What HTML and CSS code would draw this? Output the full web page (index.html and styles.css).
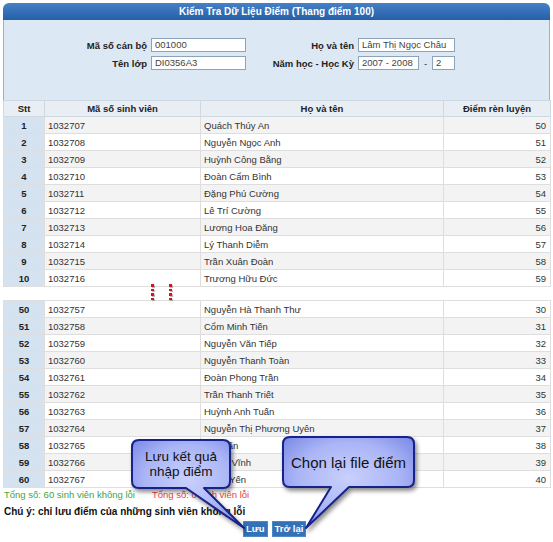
FILE: index.html
```html
<!DOCTYPE html>
<html lang="vi">
<head>
<meta charset="utf-8">
<title>Kiểm Tra Dữ Liệu Điểm</title>
<link rel="stylesheet" href="styles.css">
</head>
<body>
<div class="page">
  <div class="title">Kiểm Tra Dữ Liệu Điểm (Thang điểm 100)</div>
  <div class="info">
    <div class="form">
      <span class="lbl">Mã số cán bộ</span><span class="field">001000</span>
      <span class="lbl">Họ và tên</span><span class="field">Lâm Thị Ngọc Châu</span>
      <span class="lbl">Tên lớp</span><span class="field">DI0356A3</span>
      <span class="lbl">Năm học - Học Kỳ</span>
      <span class="term"><span class="field year">2007 - 2008</span><span class="dash">-</span><span class="field sem">2</span></span>
    </div>
  </div>

  <table class="grid">
    <colgroup><col class="c1"><col class="c2"><col class="c3"><col class="c4"></colgroup>
    <thead>
      <tr><th>Stt</th><th>Mã số sinh viên</th><th>Họ và tên</th><th>Điểm rèn luyện</th></tr>
    </thead>
    <tbody>
      <tr class="alt"><td class="stt">1</td><td>1032707</td><td>Quách Thúy An</td><td class="num">50</td></tr>
      <tr><td class="stt">2</td><td>1032708</td><td>Nguyễn Ngọc Anh</td><td class="num">51</td></tr>
      <tr class="alt"><td class="stt">3</td><td>1032709</td><td>Huỳnh Công Bằng</td><td class="num">52</td></tr>
      <tr><td class="stt">4</td><td>1032710</td><td>Đoàn Cẩm Bình</td><td class="num">53</td></tr>
      <tr class="alt"><td class="stt">5</td><td>1032711</td><td>Đặng Phú Cường</td><td class="num">54</td></tr>
      <tr><td class="stt">6</td><td>1032712</td><td>Lê Trí Cường</td><td class="num">55</td></tr>
      <tr class="alt"><td class="stt">7</td><td>1032713</td><td>Lương Hoa Đăng</td><td class="num">56</td></tr>
      <tr><td class="stt">8</td><td>1032714</td><td>Lý Thanh Diễm</td><td class="num">57</td></tr>
      <tr class="alt"><td class="stt">9</td><td>1032715</td><td>Trần Xuân Đoàn</td><td class="num">58</td></tr>
      <tr><td class="stt">10</td><td>1032716</td><td>Trương Hữu Đức</td><td class="num">59</td></tr>
    </tbody>
  </table>

  <div class="gap">
    <span class="dots"><i></i><i></i><i></i><i></i></span>
    <span class="dots"><i></i><i></i><i></i><i></i></span>
  </div>

  <table class="grid">
    <colgroup><col class="c1"><col class="c2"><col class="c3"><col class="c4"></colgroup>
    <tbody>
      <tr><td class="stt">50</td><td>1032757</td><td>Nguyễn Hà Thanh Thư</td><td class="num">30</td></tr>
      <tr class="alt"><td class="stt">51</td><td>1032758</td><td>Cổm Minh Tiến</td><td class="num">31</td></tr>
      <tr><td class="stt">52</td><td>1032759</td><td>Nguyễn Văn Tiếp</td><td class="num">32</td></tr>
      <tr class="alt"><td class="stt">53</td><td>1032760</td><td>Nguyễn Thanh Toàn</td><td class="num">33</td></tr>
      <tr><td class="stt">54</td><td>1032761</td><td>Đoàn Phong Trần</td><td class="num">34</td></tr>
      <tr class="alt"><td class="stt">55</td><td>1032762</td><td>Trần Thanh Triết</td><td class="num">35</td></tr>
      <tr><td class="stt">56</td><td>1032763</td><td>Huỳnh Anh Tuấn</td><td class="num">36</td></tr>
      <tr class="alt"><td class="stt">57</td><td>1032764</td><td>Nguyễn Thị Phương Uyên</td><td class="num">37</td></tr>
      <tr><td class="stt">58</td><td>1032765</td><td>Lê Tuấn</td><td class="num">38</td></tr>
      <tr class="alt"><td class="stt">59</td><td>1032766</td><td>Phạm Vĩnh</td><td class="num">39</td></tr>
      <tr><td class="stt">60</td><td>1032767</td><td>Đặng Yến</td><td class="num">40</td></tr>
    </tbody>
  </table>

  <div class="totals"><span class="ok">Tổng số: 60 sinh viên không lỗi</span><span class="err">Tổng số: 0 sinh viên lỗi</span></div>
  <div class="note">Chú ý: chỉ lưu điểm của những sinh viên không lỗi</div>
  <div class="buttons"><span class="btn">Lưu</span><span class="btn">Trở lại</span></div>

  <div class="callout callout-save">
    <svg class="bubble" width="125" height="100" viewBox="0 0 125 100">
      <defs>
        <radialGradient id="g1" cx="50%" cy="45%" r="65%">
          <stop offset="0" stop-color="#c9d0fc"/>
          <stop offset="0.6" stop-color="#aab5f6"/>
          <stop offset="1" stop-color="#7c8ae6"/>
        </radialGradient>
      </defs>
      <path d="M11 4 H95 Q102 4 102 11 V45 Q102 52 95 52 H76 L116 92 L58 52 H11 Q4 52 4 45 V11 Q4 4 11 4 Z" fill="url(#g1)" stroke="#17228a" stroke-width="2" stroke-linejoin="round"/>
    </svg>
    <div class="ctext save-text">Lưu kết quả<br>nhập điểm</div>
  </div>

  <div class="callout callout-back">
    <svg class="bubble" width="140" height="100" viewBox="0 0 140 100">
      <defs>
        <radialGradient id="g2" cx="50%" cy="45%" r="65%">
          <stop offset="0" stop-color="#c9d0fc"/>
          <stop offset="0.6" stop-color="#aab5f6"/>
          <stop offset="1" stop-color="#7c8ae6"/>
        </radialGradient>
      </defs>
      <path d="M11 4 H128 Q135 4 135 11 V47 Q135 54 128 54 H70 L27 95 L52 54 H11 Q4 54 4 47 V11 Q4 4 11 4 Z" fill="url(#g2)" stroke="#17228a" stroke-width="2" stroke-linejoin="round"/>
    </svg>
    <div class="ctext back-text">Chọn lại file điểm</div>
  </div>
</div>
</body>
</html>
```

FILE: styles.css
```css
html, body {
  margin: 0;
  padding: 0;
  background: #ffffff;
}

body {
  font-family: "Liberation Sans", Arial, sans-serif;
  font-size: 9.5px;
  color: #333333;
}

.page {
  position: relative;
  width: 553px;
  height: 542px;
  padding-top: 3px;
  box-sizing: border-box;
  overflow: hidden;
}

.title {
  margin: 0 3px;
  height: 17px;
  line-height: 17px;
  background: linear-gradient(#4680c6, #245fa8);
  color: #ffffff;
  font-weight: bold;
  font-size: 10px;
  text-align: center;
  border-radius: 6px 6px 0 0;
}

.info {
  margin: 0 3px;
  height: 80px;
  background: #dce8f4;
  border-left: 1px solid #8db5dc;
  border-right: 1px solid #8db5dc;
  box-sizing: border-box;
  padding-top: 18px;
}

.form {
  display: grid;
  grid-template-columns: 143px 95px 104px 97px;
  column-gap: 4px;
  row-gap: 4px;
  align-items: center;
}

.lbl {
  text-align: right;
  font-weight: bold;
  font-size: 9.5px;
  color: #222222;
}

.field {
  display: block;
  height: 14px;
  background: #ffffff;
  border: 1px solid #8ea3ba;
  box-sizing: border-box;
  line-height: 12px;
  padding-left: 3px;
  font-size: 9.5px;
  color: #444444;
}

.term {
  display: flex;
  align-items: center;
}

.year {
  width: 61px;
}

.dash {
  width: 13px;
  text-align: center;
  color: #333333;
}

.sem {
  width: 23px;
}

.grid {
  width: 547px;
  margin-left: 3px;
  border-collapse: collapse;
  table-layout: fixed;
  border-left: 1px solid #6ea2d4;
  border-right: 1px solid #6ea2d4;
}

.c1 { width: 41px; }
.c2 { width: 156px; }
.c3 { width: 243px; }
.c4 { width: 107px; }

.grid th,
.grid td {
  height: 16px;
  padding: 0 3px;
  line-height: 15px;
  white-space: nowrap;
  overflow: hidden;
  border: 1px solid #dedede;
  background: #ffffff;
}

.grid th {
  height: 15px;
  background: #e9eef4;
  border-color: #cdd8e3;
  font-weight: bold;
  color: #222222;
  text-align: center;
}

.grid tr.alt td {
  background: #f3f3f3;
}

.grid td.stt,
.grid tr.alt td.stt {
  background: #d5e3f1;
  text-align: center;
  font-weight: bold;
  color: #222222;
}

.grid td.num {
  text-align: right;
  padding-right: 4px;
}

.gap {
  height: 13px;
  display: flex;
  padding-left: 151px;
  gap: 15px;
}

.dots {
  display: flex;
  flex-direction: column;
  gap: 2px;
  margin-top: -3px;
}

.dots i {
  display: block;
  width: 3px;
  height: 3px;
  background: #d8141c;
  box-shadow: 1px 1px 1px rgba(0, 0, 0, 0.3);
}

.totals {
  height: 12px;
  line-height: 12px;
  padding-left: 4px;
  margin-top: 1px;
  display: flex;
}

.ok {
  color: #3ea43e;
  width: 148px;
}

.err {
  color: #e8403e;
}

.note {
  margin-top: 5px;
  padding-left: 4px;
  height: 12px;
  line-height: 12px;
  font-weight: bold;
  font-size: 10px;
  color: #111111;
}

.buttons {
  margin-top: 3px;
  padding-left: 243px;
  display: flex;
  gap: 4px;
}

.btn {
  height: 16px;
  line-height: 14px;
  padding: 0 2px;
  background: #3372b8;
  color: #ffffff;
  font-weight: bold;
  font-size: 9.5px;
  border: 1px solid #4f86c4;
  box-sizing: border-box;
}

.callout {
  position: absolute;
}

.callout-save {
  left: 128px;
  top: 436px;
  width: 125px;
  height: 100px;
}

.callout-back {
  left: 279px;
  top: 433px;
  width: 140px;
  height: 100px;
}

.bubble {
  position: absolute;
  left: 0;
  top: 0;
  filter: drop-shadow(2px 3px 2px rgba(0, 0, 0, 0.45));
}

.ctext {
  position: absolute;
  left: 4px;
  top: 4px;
  display: flex;
  align-items: center;
  justify-content: center;
  text-align: center;
  font-family: "Liberation Sans", Arial, sans-serif;
  line-height: 15px;
  color: #111111;
}

.save-text {
  width: 98px;
  height: 48px;
  font-size: 13.5px;
}

.back-text {
  width: 131px;
  height: 50px;
  font-size: 15px;
}
```
